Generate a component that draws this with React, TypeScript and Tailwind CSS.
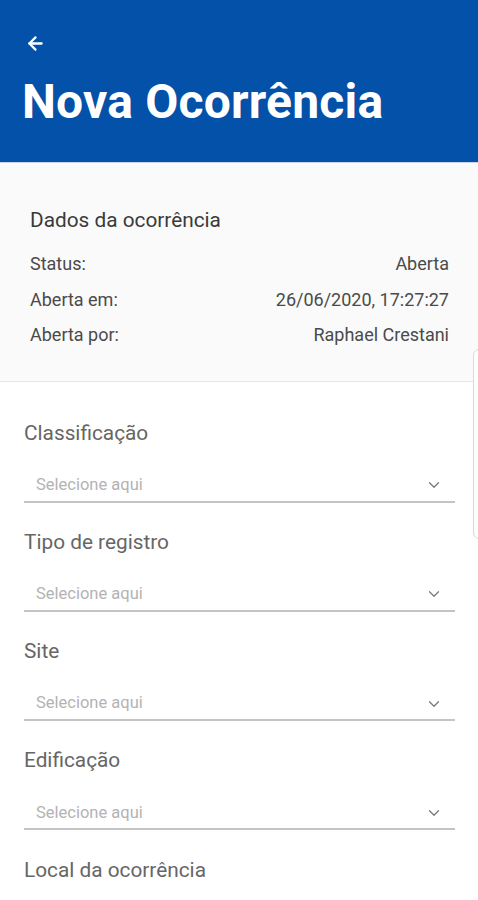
import React from "react";
import { ArrowLeft, ChevronDown } from "lucide-react";

const fields = ["Classificação", "Tipo de registro", "Site", "Edificação"];

export default function App() {
  return (
    <div className="relative w-[478px] h-[900px] overflow-hidden bg-white" style={{ fontFamily: "Roboto, 'Noto Sans', sans-serif" }}>
      <header className="h-[163px] bg-[#0351a8] border-b border-[#c9d4e4] px-[22px] pt-[33px]">
        <ArrowLeft size={21} color="white" strokeWidth={2.6} className="ml-[3px]" />
        <h1 className="mt-[19px] text-[48px] leading-[58px] font-bold text-white tracking-[0.2px]">Nova Ocorrência</h1>
      </header>

      <section className="bg-[#fafafa] border-b border-[#e6e6e6] pl-[30px] pr-[29px] pt-[45px] pb-[28px]">
        <div className="text-[20.8px] leading-[24px] text-[#3a3a3a]">Dados da ocorrência</div>
        <div className="mt-[14px] flex flex-col text-[18px] text-[#4a4a4a]">
          <div className="h-[35.5px] flex items-center justify-between"><span>Status:</span><span>Aberta</span></div>
          <div className="h-[35.5px] flex items-center justify-between"><span>Aberta em:</span><span>26/06/2020, 17:27:27</span></div>
          <div className="h-[35.5px] flex items-center justify-between"><span>Aberta por:</span><span>Raphael Crestani</span></div>
        </div>
      </section>

      <div className="pl-[24px] pr-[23px] pt-[39px] flex flex-col">
        {fields.map((f) => (
          <div key={f} className="h-[109.3px] flex flex-col">
            <div className="h-[24px] leading-[24px] text-[20.8px] text-[#666]">{f}</div>
            <div className="mt-[20px] h-[38px] border-b-2 border-[#c4c4c4] flex items-center justify-between pl-[12px] pr-[12px] pt-[5px]">
              <span className="text-[16.5px] text-[#b3b3b3]">Selecione aqui</span>
              <ChevronDown size={18} color="#777" strokeWidth={1.6} />
            </div>
          </div>
        ))}
        <div className="h-[24px] leading-[24px] text-[20.8px] text-[#666]">Local da ocorrência</div>
      </div>

      <div className="absolute left-[473px] top-[349px] w-[12px] h-[190px] rounded-lg border border-[#d9d9d9] bg-white" />
    </div>
  );
}
